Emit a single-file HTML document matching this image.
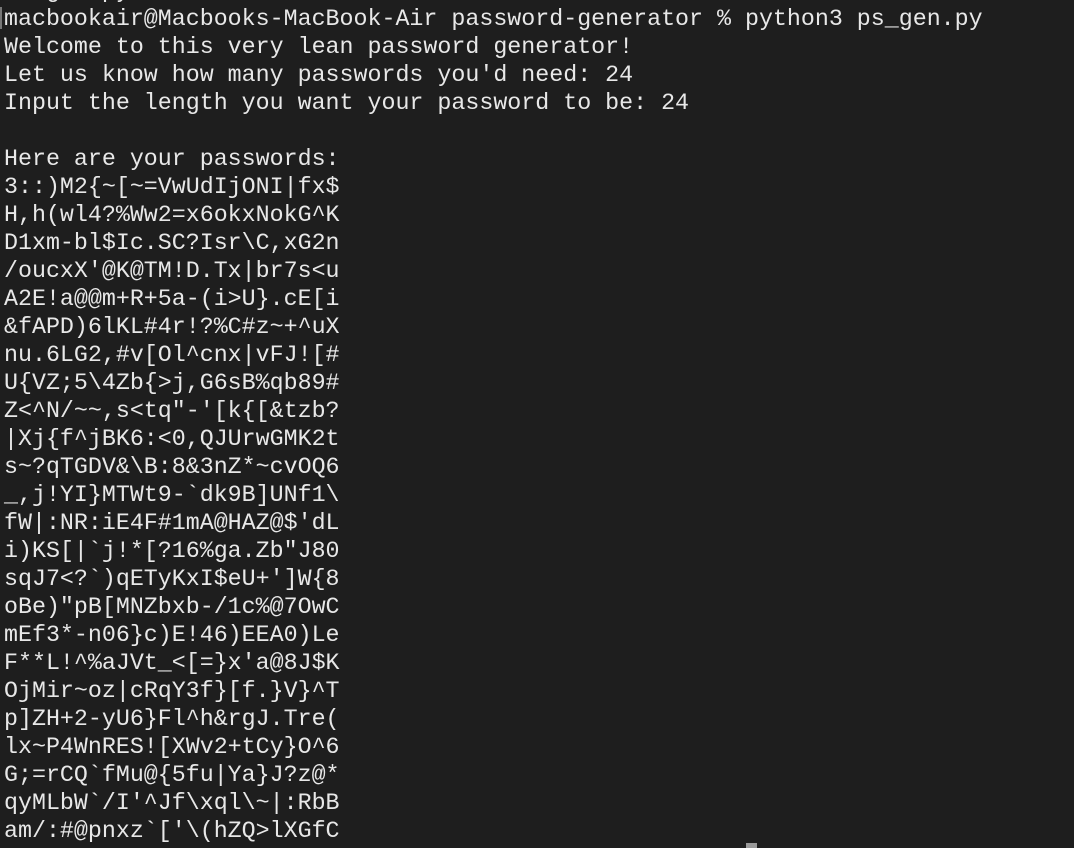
<!DOCTYPE html>
<html><head><meta charset="utf-8"><style>
html,body{margin:0;padding:0;background:#1e1e1e;width:1074px;height:848px;overflow:hidden}
pre{position:absolute;left:4px;top:-23px;margin:0;font-family:"Liberation Mono",monospace;font-size:23.3px;line-height:28px;color:#e8e8e8;white-space:pre}
.cur{position:absolute;left:746px;top:843px;width:11px;height:5px;background:#9a9a9a}
.bar{position:absolute;left:0;top:7px;width:2px;height:22px;background:#777}
</style></head><body>
<pre>  _gen.py
macbookair@Macbooks-MacBook-Air password-generator % python3 ps_gen.py
Welcome to this very lean password generator!
Let us know how many passwords you'd need: 24
Input the length you want your password to be: 24

Here are your passwords:
3::)M2{~[~=VwUdIjONI|fx$
H,h(wl4?%Ww2=x6okxNokG^K
D1xm-bl$Ic.SC?Isr\C,xG2n
/oucxX'@K@TM!D.Tx|br7s&lt;u
A2E!a@@m+R+5a-(i&gt;U}.cE[i
&amp;fAPD)6lKL#4r!?%C#z~+^uX
nu.6LG2,#v[Ol^cnx|vFJ![#
U{VZ;5\4Zb{&gt;j,G6sB%qb89#
Z&lt;^N/~~,s&lt;tq"-'[k{[&amp;tzb?
|Xj{f^jBK6:&lt;0,QJUrwGMK2t
s~?qTGDV&amp;\B:8&amp;3nZ*~cvOQ6
_,j!YI}MTWt9-`dk9B]UNf1\
fW|:NR:iE4F#1mA@HAZ@$'dL
i)KS[|`j!*[?16%ga.Zb"J80
sqJ7&lt;?`)qETyKxI$eU+']W{8
oBe)"pB[MNZbxb-/1c%@7OwC
mEf3*-n06}c)E!46)EEA0)Le
F**L!^%aJVt_&lt;[=}x'a@8J$K
OjMir~oz|cRqY3f}[f.}V}^T
p]ZH+2-yU6}Fl^h&amp;rgJ.Tre(
lx~P4WnRES![XWv2+tCy}O^6
G;=rCQ`fMu@{5fu|Ya}J?z@*
qyMLbW`/I'^Jf\xql\~|:RbB
am/:#@pnxz`['\(hZQ&gt;lXGfC</pre>
<div class="bar"></div>
<div class="cur"></div>
</body></html>
